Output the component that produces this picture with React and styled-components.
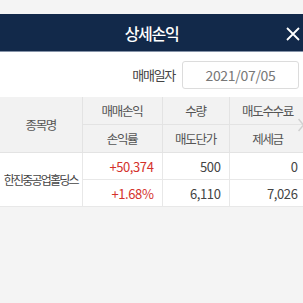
import React from 'react';
import styled, { createGlobalStyle } from 'styled-components';

const GlobalStyle = createGlobalStyle`
  html, body {
    margin: 0;
    padding: 0;
    background: #f5f5f5;
    font-family: "Noto Sans CJK KR", "Noto Sans", sans-serif;
    overflow: hidden;
  }
`;

const Page = styled.div`
  width: 303px;
  height: 303px;
  overflow: hidden;
  position: relative;
  padding-top: 14px;
  box-sizing: border-box;
  background: #f4f4f4;
`;

const Header = styled.div`
  height: 37px;
  background: #12294a;
  border-bottom: 1px solid #8593a8;
  display: flex;
  align-items: center;
  justify-content: center;
  position: relative;
  color: #fff;
`;

const Title = styled.h1`
  margin: 0;
  font-size: 16px;
  font-weight: 500;
  letter-spacing: -1.3px;
`;

const CloseBtn = styled.button`
  position: absolute;
  right: 2px;
  top: 12px;
  width: 16px;
  height: 16px;
  padding: 0;
  border: 0;
  background: none;
  display: flex;
`;

const DateBar = styled.div`
  background: #fff;
  height: 45px;
  display: flex;
  align-items: center;
  justify-content: flex-end;
  gap: 7px;
  padding-right: 4px;
`;

const Label = styled.span`
  font-size: 13px;
  color: #444;
  letter-spacing: -1.3px;
`;

const DateInput = styled.div`
  width: 117px;
  height: 28px;
  box-sizing: border-box;
  border: 1px solid #dcdcdc;
  border-radius: 3px;
  display: flex;
  align-items: center;
  justify-content: center;
  font-size: 14px;
  color: #777;
  letter-spacing: -0.3px;
`;

const Table = styled.table`
  width: 306px;
  table-layout: fixed;
  border-collapse: collapse;
  background: #fff;
  font-size: 13px;
`;

const Th = styled.th`
  background: #f2f2f2;
  font-weight: 400;
  font-size: 12.5px;
  color: #555;
  height: 27px;
  padding: 0;
  border: 1px solid #e3e3e3;
  border-top: 0;
  letter-spacing: -1.3px;
  &:first-child { border-left: 0; }
`;

const Td = styled.td`
  height: 26px;
  padding: 0 8px 0 0;
  border: 1px solid #e8e8e8;
  text-align: ${p => (p.$name ? 'center' : 'right')};
  color: ${p => (p.$up ? '#d4312b' : '#444')};
  letter-spacing: -0.4px;
  ${p => p.$name && 'padding: 0; font-size: 12px; letter-spacing: -1.8px; border-left: 0; white-space: nowrap;'}
`;

const Chevron = styled.svg`
  position: absolute;
  left: 298px;
  top: 118px;
`;

export default function App() {
  return (
    <Page>
      <GlobalStyle />
      <Header>
        <Title>상세손익</Title>
        <CloseBtn aria-label="닫기">
          <svg width="16" height="16" viewBox="0 0 16 16">
            <path d="M2 2 L14 14 M14 2 L2 14" stroke="#fff" strokeWidth="1.8" />
          </svg>
        </CloseBtn>
      </Header>
      <DateBar>
        <Label>매매일자</Label>
        <DateInput>2021/07/05</DateInput>
      </DateBar>
      <Table>
        <colgroup>
          <col style={{ width: 82 }} />
          <col style={{ width: 80 }} />
          <col style={{ width: 67 }} />
          <col style={{ width: 77 }} />
        </colgroup>
        <thead>
          <tr>
            <Th rowSpan={2}>종목명</Th>
            <Th>매매손익</Th>
            <Th>수량</Th>
            <Th>매도수수료</Th>
          </tr>
          <tr>
            <Th>손익률</Th>
            <Th>매도단가</Th>
            <Th>제세금</Th>
          </tr>
        </thead>
        <tbody>
          <tr>
            <Td $name rowSpan={2}>한진중공업홀딩스</Td>
            <Td $up>+50,374</Td>
            <Td>500</Td>
            <Td>0</Td>
          </tr>
          <tr>
            <Td $up>+1.68%</Td>
            <Td>6,110</Td>
            <Td>7,026</Td>
          </tr>
        </tbody>
      </Table>
      <Chevron width="6" height="14" viewBox="0 0 6 14">
        <path d="M0.5 1 L5.5 7 L0.5 13" fill="none" stroke="#d0d0d0" strokeWidth="1.5" />
      </Chevron>
    </Page>
  );
}
